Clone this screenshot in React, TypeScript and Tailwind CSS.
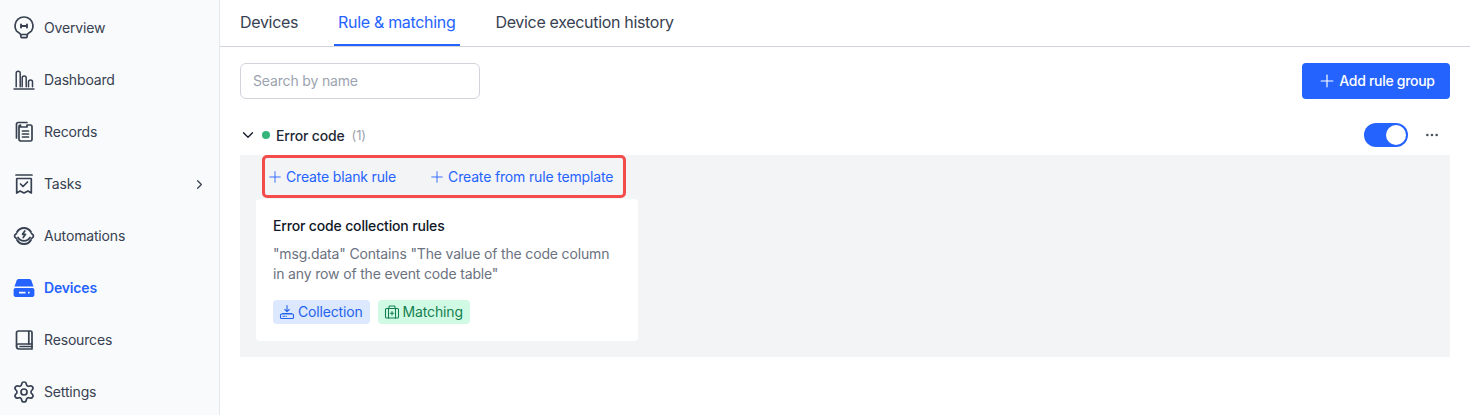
import React from "react";
import { ChevronDown, ChevronRight, Ellipsis, Plus, Settings } from "lucide-react";

const iconProps = {
  width: 24,
  height: 24,
  viewBox: "0 0 24 24",
  fill: "none",
  stroke: "currentColor",
  strokeWidth: 1.7,
  strokeLinecap: "round" as const,
  strokeLinejoin: "round" as const,
};

function OverviewIcon() {
  return (
    <svg {...iconProps}>
      <path d="M8.500 18.500C8.500 17 6 16.500 4.520 15A9 9 0 1 1 19.480 15C18 16.500 15.500 17 15.500 18.500z" />
      <path d="M8.800 18.500v1.500c0 1 .7 1.700 1.700 1.700h3c1 0 1.700-.7 1.700-1.700v-1.500" />
      <path d="M9 8.500v3M15 8.500v3M9 10h6" strokeWidth={1.9} />
    </svg>
  );
}

function DashboardIcon() {
  return (
    <svg {...iconProps} strokeWidth={1.5}>
      <path d="M2 21h20" />
      <path d="M4.200 18.800V5.200C4.200 4 5 3.200 6.200 3.200S8.200 4 8.200 5.200v13.600" />
      <path d="M10.200 18.800V10c0-1.200.8-2 2-2s2 .8 2 2v8.800" />
      <path d="M16.500 18.800V14c0-1.200.8-2 2-2s2 .8 2 2v4.800" />
    </svg>
  );
}

function RecordsIcon() {
  return (
    <svg {...iconProps}>
      <path d="M4.500 18V4.300c0-1 .7-1.800 1.700-1.800H15" />
      <path d="M8.500 5v2h6.500V5h3.500c.8 0 1.500.7 1.500 1.500v13c0 .8-.7 1.500-1.500 1.500h-9C7.700 21 7 20.300 7 19.500v-13C7 5.700 7.700 5 8.500 5z" />
      <path d="M10.500 11h6M10.500 14h6M10.500 17h6" />
    </svg>
  );
}

function TasksIcon() {
  return (
    <svg {...iconProps}>
      <path d="M4 3h16" />
      <path d="M5.200 6.500h13.600c.3 0 .5.200.5.500v14L16 19l-4 2-4-2-3.300 2V7c0-.3.200-.5.500-.5z" />
      <path d="M8.500 12l2.500 2.500 4.500-4.500" />
    </svg>
  );
}

function AutomationsIcon() {
  return (
    <svg {...iconProps}>
      <path d="M5.070 8A8 8 0 0 1 18.930 8" strokeWidth={2} />
      <path d="M5.070 16A8 8 0 0 0 18.930 16" strokeWidth={2} />
      <path d="M4.500 9.500C3.200 10.300 2.500 11.100 2.500 12s.7 1.700 2 2.500M19.500 9.500c1.300.8 2 1.600 2 2.500s-.7 1.700-2 2.500" />
      <path d="M6 13.500c1.300 2.200 3.500 3.300 6 3.300s4.700-1.100 6-3.300" />
      <path d="M12.800 7l-2.300 3.300h3L11.200 13.500" />
    </svg>
  );
}

function DevicesIcon() {
  return (
    <svg width={24} height={24} viewBox="0 0 24 24" fill="currentColor">
      <path d="M6.800 3h10.400c1 0 1.800.6 2.200 1.500l2.100 6H2.500l2.100-6C5 3.600 5.800 3 6.800 3z" />
      <path fillRule="evenodd" d="M3.500 12h17c1 0 1.900.9 1.900 1.900v5.200c0 1-.9 1.900-1.900 1.900h-17c-1 0-1.900-.9-1.900-1.900v-5.200c0-1 .9-1.900 1.900-1.900zM7 15.800h6.500v1.600H7zm9 0h1.600v1.600H16z" />
    </svg>
  );
}

function ResourcesIcon() {
  return (
    <svg {...iconProps}>
      <path d="M4.500 18V5c0-1.100.9-2 2-2h12c.8 0 1.500.7 1.500 1.500V16H6.500c-1.100 0-2 .9-2 2z" />
      <path d="M4.500 18c0 1.500 1 3 2.500 3h13v-5" />
      <path d="M16.800 3.500V16" />
      <path d="M8 18.500h12" />
    </svg>
  );
}

function CollectionIcon() {
  return (
    <svg width={16} height={16} viewBox="0 0 16 16" fill="none" stroke="currentColor" strokeWidth={1.1} strokeLinecap="round" strokeLinejoin="round">
      <path d="M8 1.500v6M5.800 5.500L8 7.700l2.200-2.200" />
      <path d="M3.500 9.500h9" />
      <rect x={1.500} y={10} width={13} height={4.500} rx={1} />
      <path d="M4 12.300h1.500M7 12.300h.5" />
    </svg>
  );
}

function MatchingIcon() {
  return (
    <svg width={16} height={16} viewBox="0 0 16 16" fill="none" stroke="currentColor" strokeWidth={1.1} strokeLinecap="round" strokeLinejoin="round">
      <rect x={1.500} y={4.500} width={13} height={9.500} rx={1} />
      <path d="M5 4.500V2.800c0-.5.300-.8.800-.8h4.400c.5 0 .8.300.8.800v1.700" />
      <path d="M4.500 4.500V14M11.500 4.500V14" />
      <path d="M8 7.500v3.500M6.300 9.200h3.400" />
    </svg>
  );
}

const navItems = [
  { label: "Overview", icon: <OverviewIcon /> },
  { label: "Dashboard", icon: <DashboardIcon /> },
  { label: "Records", icon: <RecordsIcon /> },
  { label: "Tasks", icon: <TasksIcon />, hasChildren: true },
  { label: "Automations", icon: <AutomationsIcon /> },
  { label: "Devices", icon: <DevicesIcon />, active: true },
  { label: "Resources", icon: <ResourcesIcon /> },
  { label: "Settings", icon: <Settings size={24} strokeWidth={1.7} /> },
];

export default function App() {
  return (
    <div className="flex h-[415px] w-[1470px] overflow-hidden bg-white font-['Inter',sans-serif] text-sm tracking-[-0.16px] antialiased">
      {/* Sidebar */}
      <aside className="w-[220px] shrink-0 border-r border-[#e5e7eb] bg-[#f9fafb] pt-[2px]">
        {navItems.map((item) => (
          <div
            key={item.label}
            className={`flex h-[52px] items-center pl-[12px] pr-[12px] ${
              item.active ? "font-semibold text-[#2563ff]" : "text-[#374151]"
            }`}
          >
            <span className="mr-[8px] flex h-6 w-6 shrink-0 items-center justify-center">{item.icon}</span>
            <span className="flex-1">{item.label}</span>
            {item.hasChildren && <ChevronRight size={15} className="text-[#374151]" />}
          </div>
        ))}
      </aside>

      {/* Main */}
      <main className="min-w-0 flex-1">
        <div className="flex h-[47px] gap-[36px] border-b border-[#d1d5db] pl-[20px] text-base tracking-[-0.32px]">
          <div className="flex h-[46px] items-center pb-[2px] text-[#374151]">Devices</div>
          <div className="flex h-[46px] items-center border-b-2 border-[#2563ff] pl-[4px] pr-[5px] text-[#2563ff]">Rule &amp; matching</div>
          <div className="-ml-[1px] flex h-[46px] items-center pb-[2px] text-[#374151]">Device execution history</div>
        </div>

        <div className="px-[20px]">
          <div className="mt-[16px] flex items-center justify-between">
            <input
              placeholder="Search by name"
              className="h-9 w-[240px] rounded-md border border-[#d1d5db] px-3 pb-[1px] text-[#374151] outline-none placeholder:text-[#9ca3af]"
            />
            <button className="flex h-9 w-[148px] items-center justify-center gap-[2px] rounded bg-[#2563ff] font-medium tracking-[-0.3px] text-white">
              <Plus size={20} strokeWidth={1.4} />
              Add rule group
            </button>
          </div>

          <div className="mt-[20px] mb-[4px] flex h-[32px] items-center pr-[10px]">
            <ChevronDown size={18} strokeWidth={1.7} className="-ml-[1px] text-[#111827]" />
            <span className="ml-[5px] h-2 w-2 rounded-full bg-[#34b67a]" />
            <span className="ml-[6px] mt-[1px] font-medium text-[#1f2937]">Error code</span>
            <span className="ml-[7px] text-[13px] text-[#9ca3af]">(1)</span>
            <div className="ml-auto flex h-[24px] w-[44px] items-center justify-end rounded-full bg-[#2563ff] pr-[2px]">
              <span className="h-[20px] w-[20px] rounded-full bg-white" />
            </div>
            <Ellipsis size={16} className="ml-[16px] text-[#4b5563]" />
          </div>

          <section className="h-[202px] bg-[#f3f4f6] pl-[16px]">
            <div className="ml-[6px] flex h-[43px] w-[364px] items-center gap-[32px] rounded-[5px] border-[3px] border-[#f44b4b] pl-[1px] text-[#2563ff]">
              <span className="flex items-center gap-[2px]">
                <Plus size={18} strokeWidth={1.2} />
                Create blank rule
              </span>
              <span className="flex items-center gap-[2px]">
                <Plus size={18} strokeWidth={1.2} />
                Create from rule template
              </span>
            </div>
            <div className="mt-[1px] h-[142px] w-[382px] rounded bg-white px-[17px] pt-[17px]">
              <div className="font-medium leading-5 text-[#111827]">Error code collection rules</div>
              <p className="mt-[8px] leading-5 text-[#6b7280]">
                "msg.data" Contains "The value of the code column in any row of the event code table"
              </p>
              <div className="mt-[16px] flex gap-2">
                <span className="flex h-6 items-center gap-[3px] rounded bg-[#dbe8fe] pl-[6px] pr-[7px] text-[#2563eb]">
                  <CollectionIcon />
                  Collection
                </span>
                <span className="flex h-6 items-center gap-[3px] rounded bg-[#d1fae5] pl-[6px] pr-[7px] text-[#15804f]">
                  <MatchingIcon />
                  Matching
                </span>
              </div>
            </div>
          </section>
        </div>
      </main>
    </div>
  );
}
